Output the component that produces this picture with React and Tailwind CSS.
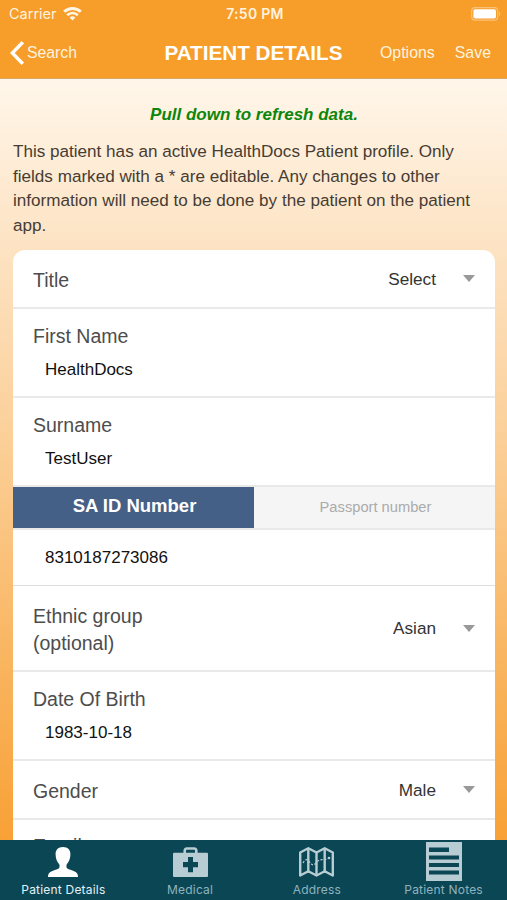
import React, { useState } from 'react';

const tabs = [
  { id: 'details', label: 'Patient Details', Icon: PersonIcon },
  { id: 'medical', label: 'Medical', Icon: MedicalIcon },
  { id: 'address', label: 'Address', Icon: MapIcon },
  { id: 'notes', label: 'Patient Notes', Icon: NotesIcon },
];

function WifiIcon() {
  return (
    <svg className="w-[19px] h-[14px]" viewBox="0 0 19 14" fill="none" stroke="#fff6e6">
      <path d="M1.200 4.800a12 12 0 0 1 16.600 0" strokeWidth="2.900" />
      <path d="M4.200 8.200a7.600 7.600 0 0 1 10.600 0" strokeWidth="2.600" />
      <path d="M9.500 13.600 6.600 10.600a4.200 4.200 0 0 1 5.800 0z" fill="#fff6e6" stroke="none" />
    </svg>
  );
}

function BatteryIcon() {
  return (
    <svg className="w-[30px] h-[14px]" viewBox="0 0 30 14">
      <rect x="0.7" y="0.7" width="26" height="12.4" rx="3.4" fill="none" stroke="#fbc27b" strokeWidth="1.2" />
      <rect x="2.4" y="2.2" width="22.6" height="9.4" rx="1.8" fill="#fff" />
      <path d="M28 4.6c1.6.6 1.6 4 0 4.6z" fill="#fbc27b" />
    </svg>
  );
}

function PersonIcon() {
  return (
    <svg className="w-[30px] h-[30px]" viewBox="0 0 30 30" fill="#fff">
      <path d="M15 0c5 0 7.600 3 7.400 7.500-.1 4-1.400 7.500-3.600 9.700-.5.6-.5 3.300.2 4 1.700 1.300 6.300 2.300 8.700 3.700 1.700 1 2.300 2.800 2.300 5.100H0c0-2.300.6-4.100 2.300-5.100 2.400-1.400 7-2.400 8.700-3.700.7-.7.700-3.400.2-4C9 15 7.700 11.500 7.600 7.500 7.400 3 10 0 15 0z" />
    </svg>
  );
}

function MedicalIcon() {
  return (
    <svg className="w-[35px] h-[30px]" viewBox="0 0 35 30">
      <path d="M11.700 7V3.800c0-1.300.8-2.300 2.300-2.300h7c1.500 0 2.300 1 2.300 2.300V7" fill="none" stroke="#b7cdd3" strokeWidth="2.600" />
      <rect y="5.800" width="35" height="24.200" rx="1" fill="#b7cdd3" />
      <path d="M15 10h5v5h5v5.200h-5v5h-5v-5h-5V15h5z" fill="#0b4655" />
    </svg>
  );
}

function MapIcon() {
  return (
    <svg className="w-[35px] h-[30px]" viewBox="0 0 35 30" fill="none" stroke="#b7cdd3" strokeWidth="2.400" strokeLinejoin="round">
      <path d="M1.200 5.500 9.300 1.200l8.200 4.300 8.200-4.300 8.100 4.300v23l-8.100-4.300-8.200 4.300-8.200-4.300-8.100 4.300z" />
      <path d="M9.300 1.200v23M17.500 5.500v23M25.700 1.200v23" />
      <path d="M4 16c2-4 4-4.500 6.500-1s4 4 6.500 1 5-4 8-3l5-2" strokeWidth="1.200" strokeDasharray="2.200 1.600" />
      <circle cx="30" cy="11" r="1.300" fill="#b7cdd3" stroke="none" />
    </svg>
  );
}

function NotesIcon() {
  return (
    <svg className="mb-[2px] w-[36px] h-[39px]" viewBox="0 0 36 39">
      <path d="M0 0h36v39H0z" fill="#b7cdd3" />
      <path d="M3 5.500h20v4.600H3zM3 13.500h30v4H3zM3 21h30v4H3zM3 28.500h30v4H3z" fill="#0b4655" />
    </svg>
  );
}

function TextRow({ label, value }) {
  return (
    <div className="h-[89px] border-b-2 border-[#e9e9e9] px-5 pt-[14px]">
      <div className="text-[19.500px] leading-[26px] text-[#4d4d4d]">{label}</div>
      <div className="pl-3 pt-[9px] text-[17px] leading-[24px] text-[#111]">{value}</div>
    </div>
  );
}

function SelectRow({ label, value, className }) {
  return (
    <div className={`flex items-center justify-between border-b-2 border-[#e9e9e9] pl-5 pr-[20px] ${className}`}>
      <div className="w-[140px] pt-[3px] text-[19.500px] leading-[27px] text-[#4d4d4d]">{label}</div>
      <div className="flex items-center">
        <span className="text-[17.200px] leading-[24px] text-[#333]">{value}</span>
        <svg className="ml-[27px] h-[7px] w-3" viewBox="0 0 12 7">
          <path d="M0 0h12L6 7z" fill="#999" />
        </svg>
      </div>
    </div>
  );
}

export default function App() {
  const [activeTab, setActiveTab] = useState('details');
  const [idType, setIdType] = useState('said');

  return (
    <div className="flex h-[900px] w-[507px] flex-col overflow-hidden bg-white font-['Liberation_Sans',sans-serif]">
      {/* Status bar and navigation */}
      <header className="h-[79px] shrink-0 border-b border-[#d9a765] bg-[#f79d2a] text-[#fff3df]">
        <div className="grid h-[27px] grid-cols-3 items-center pl-[9px] pr-[6px] font-[Inter,sans-serif]">
          <div className="flex items-center gap-[6px]">
            <span className="text-[14.500px]">Carrier</span>
            <WifiIcon />
          </div>
          <div className="text-center text-[14px] font-semibold tracking-[0.3px]">7:50 PM</div>
          <div className="flex justify-end">
            <BatteryIcon />
          </div>
        </div>
        <div className="grid h-[51px] grid-cols-[1fr_auto_1fr] items-center pl-[10px] pr-4">
          <button className="flex items-center gap-[3px] text-left text-[15.800px]">
            <svg className="h-6 w-[14px]" viewBox="0 0 14 24" fill="none" stroke="#fff" strokeWidth="3.400">
              <path d="M12.800 1.200 2.300 12l10.500 10.800" />
            </svg>
            Search
          </button>
          <h1 className="pl-1.5 text-[20.700px] font-bold text-white">PATIENT DETAILS</h1>
          <div className="flex justify-end gap-5 text-[15.900px]">
            <button>Options</button>
            <button>Save</button>
          </div>
        </div>
      </header>

      <main className="min-h-0 flex-1 overflow-hidden bg-[linear-gradient(180deg,#fff6ea_0%,#fde3c3_22%,#fbcd93_50%,#f9b560_76%,#f8a136_100%)] px-3 pt-[25px]">
        <p className="pl-px text-center text-[17px] leading-[22px] font-bold text-[#0c860c] italic">Pull down to refresh data.</p>
        <p className="mt-[14px] pl-px text-[17.100px] leading-[24.500px] text-[#463c33]">
          This patient has an active HealthDocs Patient profile. Only fields marked with a * are editable. Any changes to other
          information will need to be done by the patient on the patient app.
        </p>

        {/* Patient form */}
        <div className="mt-[12px] ml-px h-[700px] w-[482px] overflow-hidden rounded-t-xl bg-white">
          <SelectRow label="Title" value="Select" className="h-[59px]" />
          <TextRow label="First Name" value="HealthDocs" />
          <TextRow label="Surname" value="TestUser" />
          <div className="grid h-[43px] grid-cols-2 border-b-2 border-[#e9e9e9]">
            <button onClick={() => setIdType('said')} className="bg-[#456087] pb-1 pl-0.5 text-[18.500px] font-bold text-white">
              SA ID Number
            </button>
            <button onClick={() => setIdType('passport')} className="bg-[#f5f5f5] pl-0.5 text-[14.700px] text-[#ababab]">
              Passport number
            </button>
          </div>
          <div className="flex h-[56px] items-center border-b border-[#dedede] pl-8 text-[17px] text-[#111]">
            {idType === 'said' ? '8310187273086' : ''}
          </div>
          <SelectRow label="Ethnic group (optional)" value="Asian" className="h-[86px]" />
          <TextRow label="Date Of Birth" value="1983-10-18" />
          <SelectRow label="Gender" value="Male" className="h-[59px]" />
          <div className="px-5 pt-[13px] text-[19.500px] leading-[26px] text-[#4d4d4d]">Email</div>
        </div>
      </main>

      {/* Bottom tabs */}
      <nav className="grid h-[60px] shrink-0 grid-cols-4 bg-[#0b4655] font-[Inter,sans-serif]">
        {tabs.map(({ id, label, Icon }) => (
          <button key={id} onClick={() => setActiveTab(id)} className="flex flex-col items-center">
            <span className="flex h-[42px] items-center justify-center pt-[2px]">
              <Icon />
            </span>
            <span
              className={`text-[12px] leading-[15px] tracking-[0.2px] whitespace-nowrap ${
                activeTab === id ? 'text-[#e4f1f4]' : 'text-[#8fb3bd]'
              }`}
            >
              {label}
            </span>
          </button>
        ))}
      </nav>
    </div>
  );
}
